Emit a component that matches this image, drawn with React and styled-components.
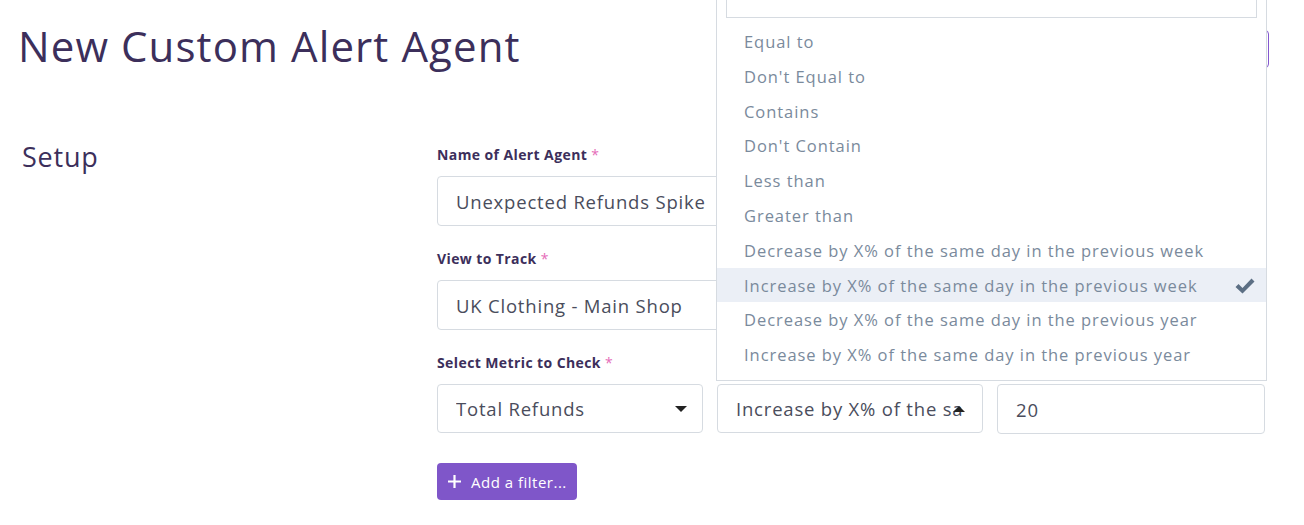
import React from "react"
import styled, { createGlobalStyle } from "styled-components"

const GlobalStyle = createGlobalStyle`
  html, body {
    margin: 0;
    padding: 0;
    background: #ffffff;
    font-family: "Open Sans", "Liberation Sans", sans-serif;
    overflow: hidden;
  }
`

const Page = styled.div`
  width: 1304px;
  height: 525px;
  position: relative;
  overflow: hidden;
`

const Header = styled.header`
  display: flex;
  justify-content: space-between;
  align-items: flex-start;
  padding: 20px 35px 0 18px;
  height: 52px;
`

const Title = styled.h1`
  margin: 0;
  font-size: 42px;
  font-weight: 400;
  line-height: 52px;
  letter-spacing: 1.1px;
  color: #3c2f5b;
`

const OutlineButton = styled.button`
  margin-top: 10px;
  height: 38px;
  width: 150px;
  border: 1px solid #8458cf;
  border-radius: 4px;
  background: #fff;
  color: #8458cf;
  font: inherit;
  font-size: 15px;
`

const Section = styled.section`
  display: grid;
  grid-template-columns: 415px 828px;
  padding: 73px 0 0 22px;
`

const SectionTitle = styled.h2`
  margin: 0;
  font-size: 27px;
  font-weight: 400;
  letter-spacing: 0.8px;
  color: #3c2f5b;
  line-height: 24px;
`

const Form = styled.div`
  display: flex;
  flex-direction: column;
`

const Field = styled.div`
  display: flex;
  flex-direction: column;
  gap: 11px;
  margin-bottom: 23px;
`

const Label = styled.label`
  font-size: 14px;
  font-weight: 700;
  letter-spacing: 0.4px;
  color: #3c2f5b;
  line-height: 20px;

  span {
    color: #e56bb8;
    font-weight: 400;
    margin-left: 4px;
  }
`

const TextInput = styled.div`
  box-sizing: border-box;
  height: ${(p) => p.$h || 50}px;
  width: ${(p) => p.$w || 828}px;
  border: 1px solid #d6dbe1;
  border-radius: 4px;
  padding: 0 ${(p) => p.$pr || 18}px 0 18px;
  display: flex;
  align-items: center;
  font-size: 18.5px;
  letter-spacing: 0.8px;
  color: #4a4d5c;
  background: #fff;
  position: relative;
  white-space: nowrap;
`

const Value = styled.span`
  flex: 1;
  overflow: hidden;
`

const Row = styled.div`
  display: flex;
  gap: 14px;
  align-items: flex-start;
`

const SelectWrap = styled.div`
  position: relative;
`

const Caret = styled.span`
  position: absolute;
  right: ${(p) => p.$right}px;
  top: 50%;
  width: 0;
  height: 0;
  margin-top: -3px;
  border-left: 6px solid transparent;
  border-right: 6px solid transparent;
  ${(p) =>
    p.$up
      ? "border-bottom: 6px solid #222;"
      : "border-top: 6px solid #222;"}
`

const Menu = styled.div`
  position: absolute;
  left: -1px;
  bottom: calc(100% + 3px);
  width: 549px;
  border: 1px solid #d6dbe1;
  border-top: none;
  background: #fff;
  padding: 0 0 8px;
  z-index: 10;
`

const Search = styled.div`
  margin: 0 9px 6px;
  height: 40px;
  border: 1px solid #d6dbe1;
`

const Item = styled.div`
  height: 34.8px;
  display: flex;
  align-items: center;
  justify-content: space-between;
  padding: 0 11px 0 27px;
  font-size: 16.5px;
  letter-spacing: 0.95px;
  color: #7a8a9c;
  white-space: nowrap;
  background: ${(p) => (p.$active ? "#ebeff6" : "transparent")};
`

const Check = styled.svg`
  width: 20px;
  height: 17px;
  fill: #5c6f84;
`

const PrimaryButton = styled.button`
  margin-top: 6px;
  align-self: flex-start;
  display: flex;
  align-items: center;
  gap: 10px;
  height: 37px;
  padding: 0 10px 0 11px;
  border: none;
  border-radius: 4px;
  background: #7f56c9;
  color: #fff;
  font-family: inherit;
  font-size: 15px;
  letter-spacing: 0.5px;
`

const options = [
  "Equal to",
  "Don't Equal to",
  "Contains",
  "Don't Contain",
  "Less than",
  "Greater than",
  "Decrease by X% of the same day in the previous week",
  "Increase by X% of the same day in the previous week",
  "Decrease by X% of the same day in the previous year",
  "Increase by X% of the same day in the previous year",
]

export default function App() {
  return (
    <Page>
      <GlobalStyle />
      <Header>
        <Title>New Custom Alert Agent</Title>
        <OutlineButton>Save Agent</OutlineButton>
      </Header>
      <Section>
        <SectionTitle>Setup</SectionTitle>
        <Form>
          <Field>
            <Label>
              Name of Alert Agent<span>*</span>
            </Label>
            <TextInput>Unexpected Refunds Spike</TextInput>
          </Field>
          <Field>
            <Label>
              View to Track<span>*</span>
            </Label>
            <TextInput>UK Clothing - Main Shop</TextInput>
          </Field>
          <Field>
            <Label>
              Select Metric to Check<span>*</span>
            </Label>
            <Row>
              <SelectWrap>
                <TextInput $w={266} $h={49}>
                  <Value>Total Refunds</Value>
                </TextInput>
                <Caret $right={16} />
              </SelectWrap>
              <SelectWrap>
                <TextInput $w={266} $h={49} $pr={18}>
                  <Value>Increase by X% of the same day in the previous week</Value>
                </TextInput>
                <Caret $right={18} $up />
                <Menu>
                  <Search />
                  {options.map((o, i) => (
                    <Item key={o} $active={i === 7}>
                      {o}
                      {i === 7 && (
                        <Check viewBox="0 0 20 17">
                          <path d="M0.5 10 L3.5 7 L7.5 11 L16.5 1.5 L19.5 4.5 L7.5 16.5 Z" />
                        </Check>
                      )}
                    </Item>
                  ))}
                </Menu>
              </SelectWrap>
              <TextInput $w={268}>20</TextInput>
            </Row>
          </Field>
          <PrimaryButton>
            <svg width="13" height="13" viewBox="0 0 13 13">
              <path d="M6.5 0v13M0 6.5h13" stroke="#fff" strokeWidth="2.2" />
            </svg>
            Add a filter...
          </PrimaryButton>
        </Form>
      </Section>
    </Page>
  )
}
